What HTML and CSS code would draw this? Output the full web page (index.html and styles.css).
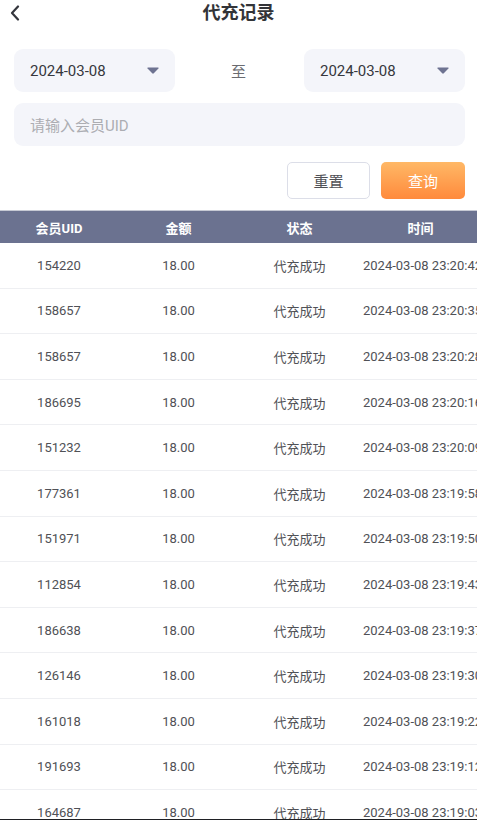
FILE: index.html
```html
<!DOCTYPE html>
<html lang="zh-CN">
<head>
<meta charset="utf-8">
<meta name="viewport" content="width=device-width, initial-scale=1">
<title>代充记录</title>
<link rel="stylesheet" href="styles.css">
</head>
<body>
<div class="page">
  <header class="nav">
    <div class="nav-left">
      <svg class="back" width="10" height="16" viewBox="0 0 10 16"><path d="M8 1.5 L2 8 L8 14.5" fill="none" stroke="#34363d" stroke-width="2.2" stroke-linecap="round" stroke-linejoin="round"/></svg>
    </div>
    <h1 class="title">代充记录</h1>
    <div class="nav-right"></div>
  </header>

  <section class="filters">
    <div class="date-row">
      <div class="date-box">
        <span class="date-text">2024-03-08</span>
        <svg class="caret" width="12" height="7" viewBox="0 0 12 7"><path d="M1 0.6 H11 Q12 0.6 11.4 1.5 L6.8 6.3 Q6 7 5.2 6.3 L0.6 1.5 Q0 0.6 1 0.6 Z" fill="#6e7391"/></svg>
      </div>
      <span class="to">至</span>
      <div class="date-box">
        <span class="date-text">2024-03-08</span>
        <svg class="caret" width="12" height="7" viewBox="0 0 12 7"><path d="M1 0.6 H11 Q12 0.6 11.4 1.5 L6.8 6.3 Q6 7 5.2 6.3 L0.6 1.5 Q0 0.6 1 0.6 Z" fill="#6e7391"/></svg>
      </div>
    </div>
    <div class="uid-box"><span class="placeholder">请输入会员UID</span></div>
    <div class="btn-row">
      <button class="btn btn-reset">重置</button>
      <button class="btn btn-query">查询</button>
    </div>
  </section>

  <section class="table">
    <div class="row head">
      <div class="cell">会员UID</div><div class="cell">金额</div><div class="cell">状态</div><div class="cell">时间</div>
    </div>
    <div class="row"><div class="cell">154220</div><div class="cell">18.00</div><div class="cell">代充成功</div><div class="cell">2024-03-08 23:20:42</div></div>
    <div class="row"><div class="cell">158657</div><div class="cell">18.00</div><div class="cell">代充成功</div><div class="cell">2024-03-08 23:20:35</div></div>
    <div class="row"><div class="cell">158657</div><div class="cell">18.00</div><div class="cell">代充成功</div><div class="cell">2024-03-08 23:20:28</div></div>
    <div class="row"><div class="cell">186695</div><div class="cell">18.00</div><div class="cell">代充成功</div><div class="cell">2024-03-08 23:20:16</div></div>
    <div class="row"><div class="cell">151232</div><div class="cell">18.00</div><div class="cell">代充成功</div><div class="cell">2024-03-08 23:20:09</div></div>
    <div class="row"><div class="cell">177361</div><div class="cell">18.00</div><div class="cell">代充成功</div><div class="cell">2024-03-08 23:19:58</div></div>
    <div class="row"><div class="cell">151971</div><div class="cell">18.00</div><div class="cell">代充成功</div><div class="cell">2024-03-08 23:19:50</div></div>
    <div class="row"><div class="cell">112854</div><div class="cell">18.00</div><div class="cell">代充成功</div><div class="cell">2024-03-08 23:19:43</div></div>
    <div class="row"><div class="cell">186638</div><div class="cell">18.00</div><div class="cell">代充成功</div><div class="cell">2024-03-08 23:19:37</div></div>
    <div class="row"><div class="cell">126146</div><div class="cell">18.00</div><div class="cell">代充成功</div><div class="cell">2024-03-08 23:19:30</div></div>
    <div class="row"><div class="cell">161018</div><div class="cell">18.00</div><div class="cell">代充成功</div><div class="cell">2024-03-08 23:19:22</div></div>
    <div class="row"><div class="cell">191693</div><div class="cell">18.00</div><div class="cell">代充成功</div><div class="cell">2024-03-08 23:19:12</div></div>
    <div class="row"><div class="cell">164687</div><div class="cell">18.00</div><div class="cell">代充成功</div><div class="cell">2024-03-08 23:19:03</div></div>
  </section>
</div>
</body>
</html>
```

FILE: styles.css
```css
* { box-sizing: border-box; }
html, body { margin: 0; padding: 0; background: #ffffff; }
body {
  font-family: Roboto, "Noto Sans CJK SC", "Noto Sans", sans-serif;
  color: #333;
  width: 477px;
  height: 820px;
  overflow: hidden;
}
.page {
  height: 820px;
  overflow: hidden;
  border-bottom: 1px solid #1f2024;
}
.nav {
  display: grid;
  grid-template-columns: 1fr auto 1fr;
  align-items: center;
  height: 26px;
}
.nav-left { padding-left: 10px; display: flex; align-items: center; }
.back { display: block; margin-top: 0; }
.title {
  margin: 0;
  font-size: 18px;
  font-weight: 700;
  line-height: 26px;
  color: #333438;
}
.filters {
  padding: 23px 12px 0 14px;
}
.date-row {
  display: flex;
  align-items: center;
  justify-content: space-between;
}
.date-box {
  width: 161px;
  height: 43px;
  border-radius: 9px;
  background: #f4f5fa;
  display: flex;
  align-items: center;
  justify-content: space-between;
  padding: 0 16px 0 16px;
}
.date-text {
  font-size: 15px;
  color: #36373d;
}
.caret { display: block; }
.to {
  font-size: 15px;
  color: #6a6b70;
  margin-left: -2px;
}
.uid-box {
  margin-top: 11px;
  height: 43px;
  border-radius: 9px;
  background: #f4f5fa;
  display: flex;
  align-items: center;
  padding-left: 16px;
}
.placeholder {
  font-size: 15px;
  color: #acadb2;
}
.btn-row {
  display: flex;
  justify-content: flex-end;
  gap: 11px;
  margin-top: 16px;
}
.btn {
  width: 84px;
  height: 37px;
  border-radius: 5px;
  font-family: inherit;
  font-size: 15px;
  padding: 0;
  cursor: pointer;
}
.btn-reset {
  background: #ffffff;
  border: 1px solid #dcdee8;
  color: #4f5055;
  width: 83px;
}
.btn-query {
  border: none;
  color: #ffffff;
  background: linear-gradient(180deg, #ffb866 0%, #ff8a3c 100%);
}
.table {
  margin-top: 11px;
  width: 477px;
  overflow: hidden;
}
.row {
  display: grid;
  grid-template-columns: 118px 121px 121px 121px;
  align-items: center;
  height: 45.6px;
  border-bottom: 1px solid #eeeff2;
  font-size: 13px;
  color: #505156;
}
.row.head {
  height: 33px;
  background: #6b7290;
  border-top: 1px solid #c6c9d4;
  border-bottom: none;
  color: #ffffff;
  font-weight: 700;
}
.cell {
  text-align: center;
  white-space: nowrap;
  padding: 0 3px;
}
```
